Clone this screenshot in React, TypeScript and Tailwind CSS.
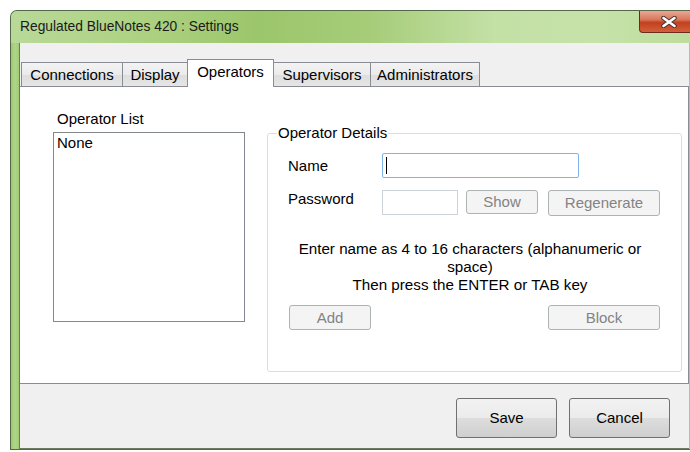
import React from "react";

type TabProps = { label: string; width: string; active?: boolean; first?: boolean };

function Tab({ label, width, active, first }: TabProps) {
  if (active) {
    return (
      <div
        className={`${width} -ml-px relative z-10 -mb-px h-[28px] flex items-start justify-center pt-[3px] bg-white border border-b-0 border-[#898c95] text-[15px] leading-[18px] text-black`}
      >
        {label}
      </div>
    );
  }
  return (
    <div
      className={`${width} ${first ? "" : "-ml-px"} h-[24px] flex items-center justify-center bg-[linear-gradient(180deg,#f3f3f3_0%,#ebebeb_50%,#dedede_51%,#e5e5e5_100%)] border border-b-0 border-[#898c95] text-[15px] leading-[18px] text-black`}
    >
      {label}
    </div>
  );
}

type BtnProps = { children: React.ReactNode; className?: string; disabled?: boolean };

function WinButton({ children, className = "", disabled }: BtnProps) {
  const look = disabled
    ? "border-[#adb2b5] bg-[#f4f4f4] text-[#838383]"
    : "border-[#707070] bg-[linear-gradient(180deg,#f2f2f2_0%,#ebebeb_49%,#dddddd_51%,#cfcfcf_100%)] text-black";
  return (
    <button
      type="button"
      className={`flex items-center justify-center rounded-[3px] border text-[15px] leading-[18px] ${look} ${className}`}
    >
      {children}
    </button>
  );
}

function CloseButton() {
  return (
    <div className="absolute left-[628px] top-0 w-[60px] h-[22px] rounded-bl-[4px] border border-t-0 border-[#6e2a1c] bg-[linear-gradient(180deg,#e9a794_0%,#d87a5e_40%,#c2401f_55%,#d2613b_100%)] flex items-center pl-[21px]">
      <svg width="16" height="12" viewBox="0 0 16 12">
        <path d="M2.5 2 L13.5 10 M13.5 2 L2.5 10" stroke="#4a3530" strokeWidth="4.6" strokeLinecap="round" />
        <path d="M2.5 2 L13.5 10 M13.5 2 L2.5 10" stroke="#ffffff" strokeWidth="2.6" strokeLinecap="round" />
      </svg>
    </div>
  );
}

export default function App() {
  return (
    <div className="w-[690px] h-[452px] bg-white overflow-hidden font-['Liberation_Sans',Arial,sans-serif]">
      <div className="relative ml-[10px] mt-[10px] w-[690px] h-[440px] flex flex-col rounded-tl-[7px] border-l border-t border-b border-[#55694a] bg-[#a6cf7a] overflow-hidden">
        {/* title bar */}
        <div className="h-[32px] shrink-0 flex items-center pl-[9px] bg-[linear-gradient(90deg,#b9d999_0%,#aed283_18%,#9cc66b_36%,#a6cc79_52%,#c3e0a5_70%,#c6e2a9_85%,#bcdc9b_100%)]">
          <span className="text-[13.8px] leading-[16px] text-[#1a1a1a]">Regulated BlueNotes 420 : Settings</span>
        </div>
        <CloseButton />

        <div className="flex-1 flex">
          {/* left frame */}
          <div className="w-[8px] shrink-0 bg-[linear-gradient(90deg,#9cc86f,#b0d68a_50%,#a2cb75)]" />

          {/* client area */}
          <div className="w-[670px] flex flex-col border-l border-b border-[#6c7a62] bg-[#f0f0f0]">
            <div className="flex items-end pt-[16px] pl-px h-[43px]">
              <Tab label="Connections" width="w-[102px]" first />
              <Tab label="Display" width="w-[66px]" />
              <Tab label="Operators" width="w-[87px]" active />
              <Tab label="Supervisors" width="w-[98px]" />
              <Tab label="Administrators" width="w-[110px]" />
            </div>

            {/* tab page */}
            <div className="h-[298px] shrink-0 bg-white border-t border-r border-b border-[#898c95] flex items-start">
              <div className="ml-[33px] mt-[23px] flex flex-col">
                <span className="pl-[4px] text-[15px] leading-[18px] text-black">Operator List</span>
                <div className="mt-[4px] w-[192px] h-[190px] border border-[#828790] bg-white px-[3px] py-px text-[15px] leading-[18px] text-black">
                  None
                </div>
              </div>

              <fieldset className="ml-[22px] mt-[37px] w-[415px] h-[248px] rounded-[3px] border border-[#d5dfe5] pl-[20px] pr-[21px]">
                <legend className="ml-[-11px] px-px text-[15px] leading-[18px] text-black">Operator Details</legend>

                <div className="mt-[11px] flex items-center">
                  <span className="w-[94px] text-[15px] leading-[18px] text-black">Name</span>
                  <div className="w-[197px] h-[25px] rounded-[2px] border border-[#7eb4ea] bg-white flex items-center pl-[3px]">
                    <span className="w-px h-[17px] bg-black" />
                  </div>
                </div>

                <div className="mt-[12px] flex items-start">
                  <span className="w-[94px] text-[15px] leading-[18px] text-black">Password</span>
                  <div className="w-[76px] h-[25px] border border-[#ccd2d8] bg-white" />
                  <WinButton disabled className="ml-[8px] w-[72px] h-[24px]">
                    Show
                  </WinButton>
                  <WinButton disabled className="ml-[10px] w-[112px] h-[26px]">
                    Regenerate
                  </WinButton>
                </div>

                <p className="mt-[24px] ml-px w-[362px] text-center text-[15.2px] leading-[18px] text-black">
                  Enter name as 4 to 16 characters (alphanumeric or space)
                  <br />
                  Then press the ENTER or TAB key
                </p>

                <div className="mt-[11px] flex justify-between">
                  <WinButton disabled className="ml-px w-[82px] h-[25px]">
                    Add
                  </WinButton>
                  <WinButton disabled className="w-[112px] h-[25px]">
                    Block
                  </WinButton>
                </div>
              </fieldset>
            </div>

            {/* dialog buttons */}
            <div className="flex-1 flex justify-end items-start pt-[14px] pr-[19px] gap-[12px]">
              <WinButton className="w-[101px] h-[40px]">Save</WinButton>
              <WinButton className="w-[101px] h-[40px]">Cancel</WinButton>
            </div>
          </div>
        </div>
      </div>
    </div>
  );
}
